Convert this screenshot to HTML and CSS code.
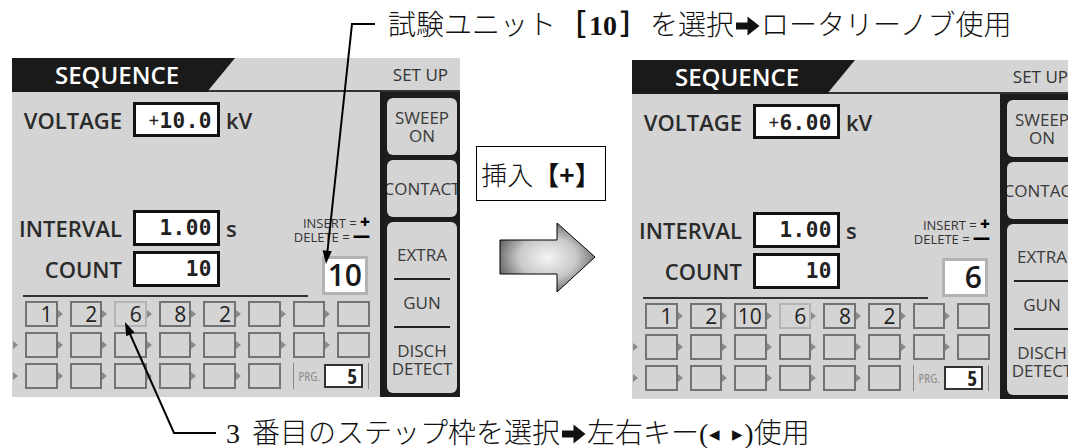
FILE: index.html
```html
<!DOCTYPE html>
<html>
    <head>
        <link rel="stylesheet" href="styles.css">
    </head>
<body>
<p class="note note-top">試験ユニット<b class="br">［<span class="num">10</span>］</b>を選択<svg class="arr" width="24" height="20" viewBox="0 0 24 20"><path d="M0 6.5H11.5V0.5L23.5 10L11.5 19.5V13.5H0Z"/></svg>ロータリーノブ使用</p>

<div class="stage">
    <section class="panel">
        <header class="panel-head">
            <div class="tab">SEQUENCE</div>
            <div class="setup">SET UP</div>
        </header>
        <div class="panel-body">
            <div class="main">
                <div class="field voltage">
                    <span class="label">VOLTAGE</span>
                    <span class="value"><i>+</i>10.0</span>
                    <span class="unit">kV</span>
                </div>
                <div class="lower">
                    <div class="fields">
                        <div class="field">
                            <span class="label">INTERVAL</span>
                            <span class="value">1.00</span>
                            <span class="unit">s</span>
                        </div>
                        <div class="field">
                            <span class="label">COUNT</span>
                            <span class="value">10</span>
                        </div>
                    </div>
                    <div class="edit">
                        <div class="keys">
                            <div>INSERT = <b>+</b></div>
                            <div>DELETE = <b>—</b></div>
                        </div>
                        <div class="count-box">10</div>
                    </div>
                </div>
                <div class="rule"></div>
                <div class="steps">
                    <div class="step-row first">
                        <div class="cell"><i></i><span class="box">1</span></div>
                        <div class="cell"><i></i><span class="box">2</span></div>
                        <div class="cell"><i></i><span class="box sel">6</span></div>
                        <div class="cell"><i></i><span class="box">8</span></div>
                        <div class="cell"><i></i><span class="box">2</span></div>
                        <div class="cell"><i></i><span class="box"></span></div>
                        <div class="cell"><i></i><span class="box"></span></div>
                        <div class="cell"><i></i><span class="box"></span></div>
                    </div>
                    <div class="step-row">
                        <div class="cell"><i></i><span class="box"></span></div>
                        <div class="cell"><i></i><span class="box"></span></div>
                        <div class="cell"><i></i><span class="box"></span></div>
                        <div class="cell"><i></i><span class="box"></span></div>
                        <div class="cell"><i></i><span class="box"></span></div>
                        <div class="cell"><i></i><span class="box"></span></div>
                        <div class="cell"><i></i><span class="box"></span></div>
                        <div class="cell"><i></i><span class="box"></span></div>
                    </div>
                    <div class="step-row">
                        <div class="cell"><i></i><span class="box"></span></div>
                        <div class="cell"><i></i><span class="box"></span></div>
                        <div class="cell"><i></i><span class="box"></span></div>
                        <div class="cell"><i></i><span class="box"></span></div>
                        <div class="cell"><i></i><span class="box"></span></div>
                        <div class="cell"><i></i><span class="box"></span></div>
                        <div class="prg"><span>PRG.</span><span class="prg-box">5</span></div>
                    </div>
                </div>
            </div>
            <div class="side">
                <div class="btn">SWEEP<br>ON</div>
                <div class="btn">CONTACT</div>
                <div class="btn tall">
                    <span>EXTRA</span>
                    <hr>
                    <span>GUN</span>
                    <hr>
                    <span>DISCH<br>DETECT</span>
                </div>
            </div>
        </div>
    </section>

    <div class="middle">
        <div class="insert-label">挿入<b>【+】</b></div>
        <svg class="big-arrow" width="97" height="71" viewBox="0 0 97 71">
            <defs>
                <radialGradient id="shade" cx="50%" cy="50%" r="55%">
                    <stop offset="0" stop-color="#f4f4f4"/>
                    <stop offset="0.55" stop-color="#c8c8c8"/>
                    <stop offset="1" stop-color="#626262"/>
                </radialGradient>
            </defs>
            <polygon points="1,18 58,18 58,1 96,35 58,70 58,52 1,52" fill="url(#shade)" stroke="#000" stroke-width="1"/>
        </svg>
    </div>

    <section class="panel panel-right">
        <header class="panel-head">
            <div class="tab">SEQUENCE</div>
            <div class="setup">SET UP</div>
        </header>
        <div class="panel-body">
            <div class="main">
                <div class="field voltage">
                    <span class="label">VOLTAGE</span>
                    <span class="value"><i>+</i>6.00</span>
                    <span class="unit">kV</span>
                </div>
                <div class="lower">
                    <div class="fields">
                        <div class="field">
                            <span class="label">INTERVAL</span>
                            <span class="value">1.00</span>
                            <span class="unit">s</span>
                        </div>
                        <div class="field">
                            <span class="label">COUNT</span>
                            <span class="value">10</span>
                        </div>
                    </div>
                    <div class="edit">
                        <div class="keys">
                            <div>INSERT = <b>+</b></div>
                            <div>DELETE = <b>—</b></div>
                        </div>
                        <div class="count-box">6</div>
                    </div>
                </div>
                <div class="rule"></div>
                <div class="steps">
                    <div class="step-row first">
                        <div class="cell"><i></i><span class="box">1</span></div>
                        <div class="cell"><i></i><span class="box">2</span></div>
                        <div class="cell"><i></i><span class="box">10</span></div>
                        <div class="cell"><i></i><span class="box sel">6</span></div>
                        <div class="cell"><i></i><span class="box">8</span></div>
                        <div class="cell"><i></i><span class="box">2</span></div>
                        <div class="cell"><i></i><span class="box"></span></div>
                        <div class="cell"><i></i><span class="box"></span></div>
                    </div>
                    <div class="step-row">
                        <div class="cell"><i></i><span class="box"></span></div>
                        <div class="cell"><i></i><span class="box"></span></div>
                        <div class="cell"><i></i><span class="box"></span></div>
                        <div class="cell"><i></i><span class="box"></span></div>
                        <div class="cell"><i></i><span class="box"></span></div>
                        <div class="cell"><i></i><span class="box"></span></div>
                        <div class="cell"><i></i><span class="box"></span></div>
                        <div class="cell"><i></i><span class="box"></span></div>
                    </div>
                    <div class="step-row">
                        <div class="cell"><i></i><span class="box"></span></div>
                        <div class="cell"><i></i><span class="box"></span></div>
                        <div class="cell"><i></i><span class="box"></span></div>
                        <div class="cell"><i></i><span class="box"></span></div>
                        <div class="cell"><i></i><span class="box"></span></div>
                        <div class="cell"><i></i><span class="box"></span></div>
                        <div class="prg"><span>PRG.</span><span class="prg-box">5</span></div>
                    </div>
                </div>
            </div>
            <div class="side">
                <div class="btn">SWEEP<br>ON</div>
                <div class="btn">CONTACT</div>
                <div class="btn tall">
                    <span>EXTRA</span>
                    <hr>
                    <span>GUN</span>
                    <hr>
                    <span>DISCH<br>DETECT</span>
                </div>
            </div>
        </div>
    </section>
</div>

<p class="note note-bottom"><span class="lead">3</span>番目のステップ枠を選択<svg class="arr" width="24" height="20" viewBox="0 0 24 20"><path d="M0 6.5H11.5V0.5L23.5 10L11.5 19.5V13.5H0Z"/></svg>左右キー(<span class="tri">◂</span><span class="tri wide">▸</span>)使用</p>

<!-- callout lines -->
<svg class="callouts" width="1068" height="448" viewBox="0 0 1068 448">
    <polyline points="375,24 352,24 327.4,252" fill="none" stroke="#000" stroke-width="2"/>
    <polygon points="326,264 331.8,251.2 322.6,250.2" fill="#000"/>
    <polyline points="216,433 174,433 130,334" fill="none" stroke="#000" stroke-width="2"/>
    <polygon points="125,322 134.6,332.4 126.2,336.2" fill="#000"/>
</svg>
</body>
</html>
```

FILE: styles.css
```css
:root {
    --panel-gray: #d4d4d4;
    --ink: #2b2b2b;
    --frame: #1c1c1c;
    --box-line: #737373;
}

body {
    margin: 0;
    width: 1068px;
    height: 448px;
    overflow: hidden;
    position: relative;
    background: #fff;
    font-family: 'Open Sans', 'Liberation Sans', sans-serif;
    color: var(--ink);
}

/* Annotations */
.note {
    margin: 0;
    font-family: 'Liberation Serif', 'Noto Sans CJK JP', serif;
    font-weight: 300;
    font-size: 28px;
    color: #111;
    white-space: nowrap;
}

.note .br {
    font-weight: 700;
    margin: 0 2px;
}

.note .num {
    margin: 0 3px;
}

.note .arr {
    margin: 0 1px 0 2px;
    vertical-align: -1px;
    fill: #111;
}

.note .lead {
    margin-right: 12px;
}

.note .tri {
    font-family: 'DejaVu Sans', sans-serif;
    font-size: 21px;
    vertical-align: 2px;
    margin-left: 1px;
}

.note .tri.wide {
    margin-left: 12px;
    margin-right: 1px;
}

.note-top {
    height: 58px;
    line-height: 52px;
    padding-left: 388px;
}

.note-bottom {
    margin-top: 20px;
    line-height: 30px;
    padding-left: 226px;
}

.callouts {
    position: absolute;
    top: 0;
    left: 0;
    pointer-events: none;
}

/* Layout */
.stage {
    display: flex;
    align-items: flex-start;
    padding-left: 12px;
}

.middle {
    width: 172px;
    flex-shrink: 0;
    display: flex;
    flex-direction: column;
    align-items: flex-start;
    padding-left: 16px;
    padding-top: 88px;
    box-sizing: border-box;
}

.insert-label {
    width: 130px;
    height: 55px;
    box-sizing: border-box;
    border: 1px solid #000;
    display: flex;
    align-items: center;
    justify-content: center;
    font-family: 'Noto Sans CJK JP', serif;
    font-weight: 300;
    font-size: 26px;
    color: #111;
}

.insert-label b {
    font-weight: 700;
}

.big-arrow {
    margin-top: 21px;
    margin-left: 23px;
}

/* Panel */
.panel {
    width: 448px;
    flex-shrink: 0;
}

.panel-right {
    margin-top: 2px;
}

.panel-head {
    display: flex;
    align-items: center;
    height: 34px;
    background: var(--panel-gray);
    box-shadow: inset 0 -2px 0 #333;
}

.tab {
    width: 223px;
    height: 34px;
    box-sizing: border-box;
    padding-left: 43px;
    background: #1a1a1a;
    clip-path: polygon(0 0, 100% 0, calc(100% - 28px) 100%, 0 100%);
    color: #fff;
    font-weight: 600;
    font-size: 24px;
    font-stretch: 88%;
    line-height: 34px;
}

.setup {
    margin-left: auto;
    padding-right: 12px;
    padding-bottom: 2px;
    font-size: 17px;
    color: #333;
}

.panel-body {
    display: flex;
    height: 305px;
}

.main {
    width: 368px;
    background: var(--panel-gray);
}

/* Fields */
.field {
    display: flex;
    align-items: center;
    height: 36px;
}

.voltage {
    margin-top: 10px;
    height: 35px;
}

.label {
    width: 110px;
    text-align: right;
    margin-right: 11px;
    font-weight: 600;
    font-size: 22px;
    font-stretch: 93%;
}

.value {
    width: 87px;
    height: 100%;
    box-sizing: border-box;
    border: 3px solid #111;
    background: #fff;
    padding-right: 5px;
    text-align: right;
    font-family: 'DejaVu Sans Mono', monospace;
    font-weight: 700;
    font-size: 21px;
    line-height: 30px;
    letter-spacing: 0.5px;
    color: #222;
}

.value i {
    font-style: normal;
    font-weight: 400;
    font-size: 17px;
    vertical-align: 2px;
}

.unit {
    margin-left: 6px;
    font-weight: 600;
    font-size: 22px;
    font-stretch: 93%;
}

.lower {
    display: flex;
    margin-top: 73px;
}

.fields {
    display: flex;
    flex-direction: column;
    gap: 5px;
}

.edit {
    margin-left: auto;
    padding-right: 10px;
    display: flex;
    flex-direction: column;
    align-items: flex-end;
}

.keys {
    margin-top: 5px;
    text-align: right;
    font-size: 13px;
    color: #333;
}

.keys div {
    height: 14px;
    line-height: 14px;
}

.keys b {
    font-size: 17px;
    line-height: 14px;
    color: #000;
    font-weight: 800;
}

.count-box {
    margin-top: 13px;
    margin-right: 2px;
    width: 46px;
    height: 39px;
    box-sizing: border-box;
    border: 3px solid #b3b3b3;
    background: #fff;
    padding-right: 3px;
    text-align: right;
    font-size: 30px;
    font-weight: 600;
    line-height: 32px;
    color: #1a1a1a;
}

.rule {
    width: 285px;
    height: 2px;
    margin-left: 11px;
    background: #333;
}

/* Step grid */
.steps {
    display: flex;
    flex-direction: column;
    gap: 5px;
    margin-top: 4px;
    padding-left: 1px;
}

.step-row {
    display: flex;
    height: 26px;
}

.cell {
    display: flex;
    align-items: center;
    width: 44.6px;
    flex-shrink: 0;
}

.cell i {
    width: 0;
    height: 0;
    border-left: 5px solid #8a8a8a;
    border-top: 4px solid transparent;
    border-bottom: 4px solid transparent;
    margin-right: 7px;
}

.step-row.first .cell:first-child i {
    visibility: hidden;
}

.box {
    flex: 1;
    height: 26px;
    box-sizing: border-box;
    border: 2px solid var(--box-line);
    padding-right: 3px;
    text-align: right;
    font-size: 21px;
    font-stretch: 90%;
    line-height: 22px;
    color: #222;
}

.box.sel {
    border-color: #b4b4b4;
}

.prg {
    display: flex;
    align-items: center;
    margin-left: 12px;
    height: 26px;
    padding: 0 5px;
    border-left: 1px solid #888;
    border-right: 1px solid #888;
    font-size: 13px;
    font-stretch: 85%;
    color: #8a8a8a;
}

.prg-box {
    width: 39px;
    height: 24px;
    margin-left: 4px;
    box-sizing: border-box;
    border: 2px solid #333;
    background: #fff;
    padding-right: 4px;
    text-align: right;
    font-weight: 700;
    font-size: 21px;
    line-height: 20px;
    color: #222;
}

/* Side buttons */
.side {
    width: 80px;
    box-sizing: border-box;
    padding: 6px 3px 4px 7px;
    background: var(--frame);
    display: flex;
    flex-direction: column;
    gap: 5px;
}

.btn {
    height: 57px;
    flex-shrink: 0;
    border-radius: 6px;
    background: var(--panel-gray);
    display: flex;
    flex-direction: column;
    align-items: center;
    justify-content: center;
    text-align: center;
    font-size: 17px;
    line-height: 18px;
    color: #3a3a3a;
    white-space: nowrap;
    overflow: hidden;
}

.btn.tall {
    flex: 1;
    justify-content: flex-start;
    padding-top: 24px;
}

.btn hr {
    width: 56px;
    height: 2px;
    margin: 14px 0;
    border: 0;
    background: #222;
}
```
